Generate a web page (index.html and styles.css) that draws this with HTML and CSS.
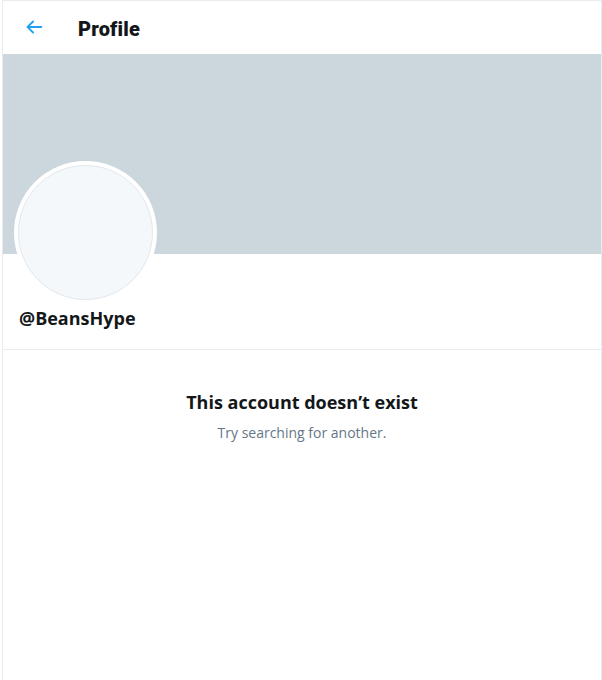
FILE: index.html
```html
<!DOCTYPE html>
<html>
<head>
<meta charset="utf-8">
<link rel="stylesheet" href="styles.css">
</head>
<body>
<div class="page">
  <header class="topbar">
    <button class="back" aria-label="Back">
      <svg viewBox="0 0 24 24" width="22" height="22"><path d="M20 11H7.414l4.293-4.293a1 1 0 0 0-1.414-1.414l-6 6a1 1 0 0 0 0 1.414l6 6a1 1 0 0 0 1.414-1.414L7.414 13H20a1 1 0 0 0 0-2z" fill="#1da1f2"/></svg>
    </button>
    <h1 class="title">Profile</h1>
  </header>
  <div class="banner"></div>
  <section class="profile">
    <div class="avatar"><div class="avatar-inner"></div></div>
    <div class="handle">@BeansHype</div>
  </section>
  <section class="empty">
    <div class="empty-title">This account doesn’t exist</div>
    <div class="empty-sub">Try searching for another.</div>
  </section>
</div>
</body>
</html>
```

FILE: styles.css
```css
html, body {
  margin: 0;
  padding: 0;
  background: #fff;
}
body {
  font-family: "Open Sans", "Noto Sans", sans-serif;
  color: #14171a;
}
.page {
  margin-left: 2px;
  width: 600px;
  box-sizing: border-box;
  height: 680px;
  border: 1px solid #e6ecf0;
  border-bottom: none;
}
.topbar {
  height: 53px;
  display: flex;
  align-items: center;
  padding-left: 20px;
  box-sizing: border-box;
}
.back {
  border: none;
  background: none;
  padding: 0;
  width: 22px;
  height: 22px;
  display: flex;
  align-items: center;
  justify-content: center;
  margin-top: -1px;
}
.title {
  margin: 3px 0 0 33px;
  font-family: "Roboto", sans-serif;
  font-weight: 900;
  font-size: 20px;
  line-height: 24px;
  color: #14171a;
  letter-spacing: 0.2px;
}
.banner {
  height: 200px;
  background: #ccd6dd;
}
.profile {
  display: flex;
  flex-direction: column;
  padding: 0 11px;
  border-bottom: 1px solid #e6ecf0;
  height: 95px;
}
.avatar {
  width: 143px;
  height: 143px;
  flex: none;
  border-radius: 50%;
  background: #fff;
  margin-top: -93px;
  padding: 4px;
  box-sizing: border-box;
}
.avatar-inner {
  width: 100%;
  height: 100%;
  border-radius: 50%;
  background: #f5f8fa;
  border: 1px solid #e1e8ed;
  box-sizing: border-box;
}
.handle {
  margin-top: 2px;
  padding-left: 5px;
  font-weight: 700;
  font-size: 18px;
  line-height: 24px;
}
.empty {
  padding-top: 40px;
  text-align: center;
}
.empty-title {
  font-weight: 700;
  font-size: 18px;
  line-height: 24px;
}
.empty-sub {
  margin-top: 9px;
  font-size: 14px;
  line-height: 20px;
  color: #657786;
}
```
